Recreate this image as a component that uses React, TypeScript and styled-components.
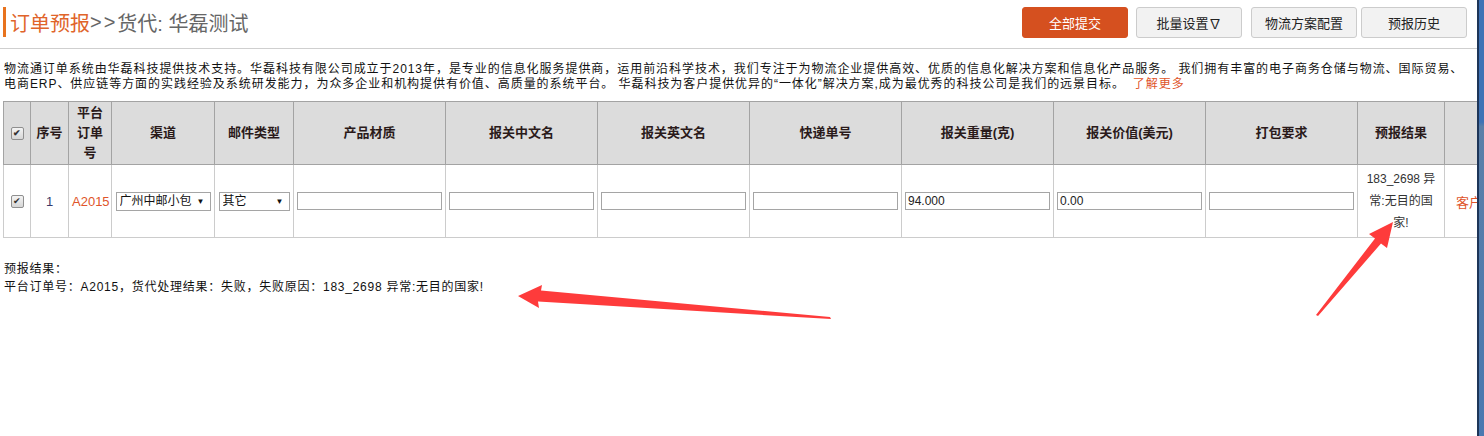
import React from "react";
import styled, { createGlobalStyle } from "styled-components";

const Global = createGlobalStyle`
  html, body { margin: 0; padding: 0; background: #fff; }
  body { font-family: "Liberation Sans", "Noto Sans CJK SC", sans-serif; color: #000; }
`;

const Page = styled.div`
  position: relative;
  display: flex;
  width: 1484px;
  height: 436px;
  overflow: hidden;
  background: #fff;
`;

const Main = styled.div`
  flex: 0 0 1477px;
  width: 1477px;
  overflow: hidden;
`;

const WindowEdge = styled.div`
  flex: 1;
  border-left: 2px solid #1d3558;
  background: linear-gradient(180deg, #3f72b5 0%, #3f72b5 28%, #5b7fa8 29%, #4a78b0 100%);
`;

const Header = styled.div`
  display: flex;
  align-items: flex-start;
  justify-content: space-between;
  height: 49px;
  box-sizing: border-box;
  padding: 7px 10px 0 3px;
  border-bottom: 1px solid #cfcfcf;
`;

const Title = styled.h1`
  margin: 0;
  height: 30px;
  display: flex;
  align-items: center;
  border-left: 3px solid #e8731e;
  padding-left: 4px;
  font-size: 20px;
  font-weight: normal;
  color: #666;
  white-space: nowrap;
`;

const TitleLead = styled.span`
  color: #e0642a;
`;

const Arrows = styled.span`
  letter-spacing: 2px;
`;

const Toolbar = styled.div`
  display: flex;
  align-items: center;
`;

const Button = styled.button<{ $primary?: boolean; $gap?: number }>`
  width: 106px;
  height: 31px;
  margin-left: ${(p) => p.$gap ?? 8}px;
  box-sizing: border-box;
  border-radius: 3px;
  border: 1px solid ${(p) => (p.$primary ? "#d5501f" : "#cccccc")};
  background: ${(p) => (p.$primary ? "#d5501f" : "#f2f2f2")};
  color: ${(p) => (p.$primary ? "#fff" : "#222")};
  font-family: "Liberation Sans", "Noto Sans CJK SC", sans-serif;
  font-size: 13px;
  padding: 0;
  cursor: pointer;
`;

const Intro = styled.p`
  margin: 13px 0 0 4px;
  font-size: 12px;
  line-height: 15px;
  letter-spacing: 0.95px;
  color: #111;
`;

const IntroLine = styled.span`
  display: block;
  white-space: nowrap;
`;

const MoreLink = styled.a`
  color: #e0542a;
  text-decoration: none;
  margin-left: 8px;
`;

const Table = styled.table`
  margin: 9px 0 0 3px;
  border-collapse: collapse;
  table-layout: fixed;
  width: 1531px;
  font-size: 12px;
`;

const HeadCell = styled.th`
  height: 63px;
  background: #dcdcdc;
  border: 1px solid #a3a3a3;
  color: #2a1a1a;
  font-size: 13px;
  font-weight: bold;
  text-align: center;
  line-height: 20px;
  padding: 0 8px;
  box-sizing: border-box;
`;

const NarrowHeadCell = styled(HeadCell)`
  padding: 0 4px;
`;

const BodyCell = styled.td<{ $tone?: "index" | "link" | "text"; $align?: "left" | "center" }>`
  height: 73px;
  border: 1px solid #cccccc;
  text-align: ${(p) => p.$align ?? "center"};
  padding: 0 ${(p) => (p.$align === "left" ? "0 0 11px" : "3px")};
  box-sizing: border-box;
  white-space: nowrap;
  overflow: hidden;
  font-size: ${(p) => (p.$tone === "index" || p.$tone === "link" ? "13px" : "12px")};
  color: ${(p) =>
    p.$tone === "index" ? "#3a3a6a" : p.$tone === "link" ? "#e0542a" : "#333"};
`;

const ResultCell = styled.td`
  height: 73px;
  border: 1px solid #cccccc;
  text-align: center;
  padding: 0 8px;
  box-sizing: border-box;
  font-size: 12px;
  line-height: 22px;
  color: #333;
`;

const Check = styled.span`
  display: inline-flex;
  align-items: center;
  justify-content: center;
  width: 11px;
  height: 11px;
  border: 1px solid #8f8f8f;
  border-radius: 2px;
  background: linear-gradient(180deg, #f4f4f4, #d6d6d6);
  color: #333;
  font-size: 9px;
  line-height: 1;
  vertical-align: middle;
`;

const SelectBox = styled.label<{ $w: number }>`
  display: inline-flex;
  align-items: center;
  width: ${(p) => p.$w}px;
  height: 19px;
  box-sizing: border-box;
  border: 1px solid #a5a5a5;
  background: #fff;
  vertical-align: middle;
`;

const Select = styled.select`
  flex: 1;
  min-width: 0;
  appearance: none;
  border: none;
  outline: none;
  background: transparent;
  padding: 0 0 0 3px;
  height: 17px;
  font-family: "Liberation Sans", "Noto Sans CJK SC", sans-serif;
  font-size: 12px;
  color: #111;
`;

const Caret = styled.span`
  flex: 0 0 auto;
  font-size: 8px;
  color: #111;
  padding: 0 5px 0 2px;
`;

const TextInput = styled.input`
  width: 145px;
  height: 18px;
  box-sizing: border-box;
  border: 1px solid #a5a5a5;
  padding: 0 2px;
  font-family: "Liberation Sans", "Noto Sans CJK SC", sans-serif;
  font-size: 12px;
  color: #222;
  vertical-align: middle;
`;

const Summary = styled.div`
  margin: 22px 0 0 4px;
  font-size: 12px;
  line-height: 18px;
  letter-spacing: 0.75px;
  color: #111;
`;

const Overlay = styled.svg`
  position: absolute;
  left: 0;
  top: 0;
  width: 1484px;
  height: 436px;
  pointer-events: none;
`;

const inputCols = ["产品材质", "报关中文名", "报关英文名", "快递单号", "报关重量(克)", "报关价值(美元)", "打包要求"];
const inputValues = ["", "", "", "", "94.000", "0.00", ""];

export default function App() {
  return (
    <>
      <Global />
      <Page>
        <Main>
          <Header>
            <Title>
              <TitleLead>订单预报</TitleLead>
              <Arrows>&gt;&gt;</Arrows>货代: 华磊测试
            </Title>
            <Toolbar>
              <Button $primary>全部提交</Button>
              <Button $gap={8}>批量设置∇</Button>
              <Button $gap={9}>物流方案配置</Button>
              <Button $gap={4}>预报历史</Button>
            </Toolbar>
          </Header>

          <Intro>
            <IntroLine>
              物流通订单系统由华磊科技提供技术支持。华磊科技有限公司成立于2013年，是专业的信息化服务提供商，运用前沿科学技术，我们专注于为物流企业提供高效、优质的信息化解决方案和信息化产品服务。 我们拥有丰富的电子商务仓储与物流、国际贸易、
            </IntroLine>
            <IntroLine>
              电商ERP、供应链等方面的实践经验及系统研发能力，为众多企业和机构提供有价值、高质量的系统平台。 华磊科技为客户提供优异的“一体化”解决方案,成为最优秀的科技公司是我们的远景目标。
              <MoreLink href="#">了解更多</MoreLink>
            </IntroLine>
          </Intro>

          <Table>
            <colgroup>
              <col style={{ width: 27 }} />
              <col style={{ width: 38 }} />
              <col style={{ width: 43 }} />
              <col style={{ width: 103 }} />
              <col style={{ width: 79 }} />
              {inputCols.map((c) => (
                <col key={c} style={{ width: 152 }} />
              ))}
              <col style={{ width: 87 }} />
              <col style={{ width: 90 }} />
            </colgroup>
            <thead>
              <tr>
                <NarrowHeadCell>
                  <Check>✔</Check>
                </NarrowHeadCell>
                <NarrowHeadCell>序号</NarrowHeadCell>
                <NarrowHeadCell>平台订单号</NarrowHeadCell>
                <HeadCell>渠道</HeadCell>
                <HeadCell>邮件类型</HeadCell>
                {inputCols.map((c) => (
                  <HeadCell key={c}>{c}</HeadCell>
                ))}
                <HeadCell>预报结果</HeadCell>
                <HeadCell></HeadCell>
              </tr>
            </thead>
            <tbody>
              <tr>
                <BodyCell>
                  <Check>✔</Check>
                </BodyCell>
                <BodyCell $tone="index">1</BodyCell>
                <BodyCell $tone="link">A2015</BodyCell>
                <BodyCell>
                  <SelectBox $w={95}>
                    <Select defaultValue="gz">
                      <option value="gz">广州中邮小包</option>
                    </Select>
                    <Caret>▼</Caret>
                  </SelectBox>
                </BodyCell>
                <BodyCell>
                  <SelectBox $w={71}>
                    <Select defaultValue="other">
                      <option value="other">其它</option>
                    </Select>
                    <Caret>▼</Caret>
                  </SelectBox>
                </BodyCell>
                {inputValues.map((v, i) => (
                  <BodyCell key={i}>
                    <TextInput defaultValue={v} />
                  </BodyCell>
                ))}
                <ResultCell>183_2698 异常:无目的国家!</ResultCell>
                <BodyCell $tone="link" $align="left">客户</BodyCell>
              </tr>
            </tbody>
          </Table>

          <Summary>
            <div>预报结果：</div>
            <div>平台订单号：A2015，货代处理结果：失败，失败原因：183_2698 异常:无目的国家!</div>
          </Summary>
        </Main>
        <WindowEdge />
        <Overlay viewBox="0 0 1484 436">
          <polygon
            fill="#fe3b3b"
            points="518,296 542,285 541,290.5 830,317 831,319 538,301.5 539,308"
          />
          <polygon
            fill="#fe3b3b"
            points="1393,222 1369,234 1375,238.5 1316,315 1318,316 1381,243.5 1387,248"
          />
        </Overlay>
      </Page>
    </>
  );
}
